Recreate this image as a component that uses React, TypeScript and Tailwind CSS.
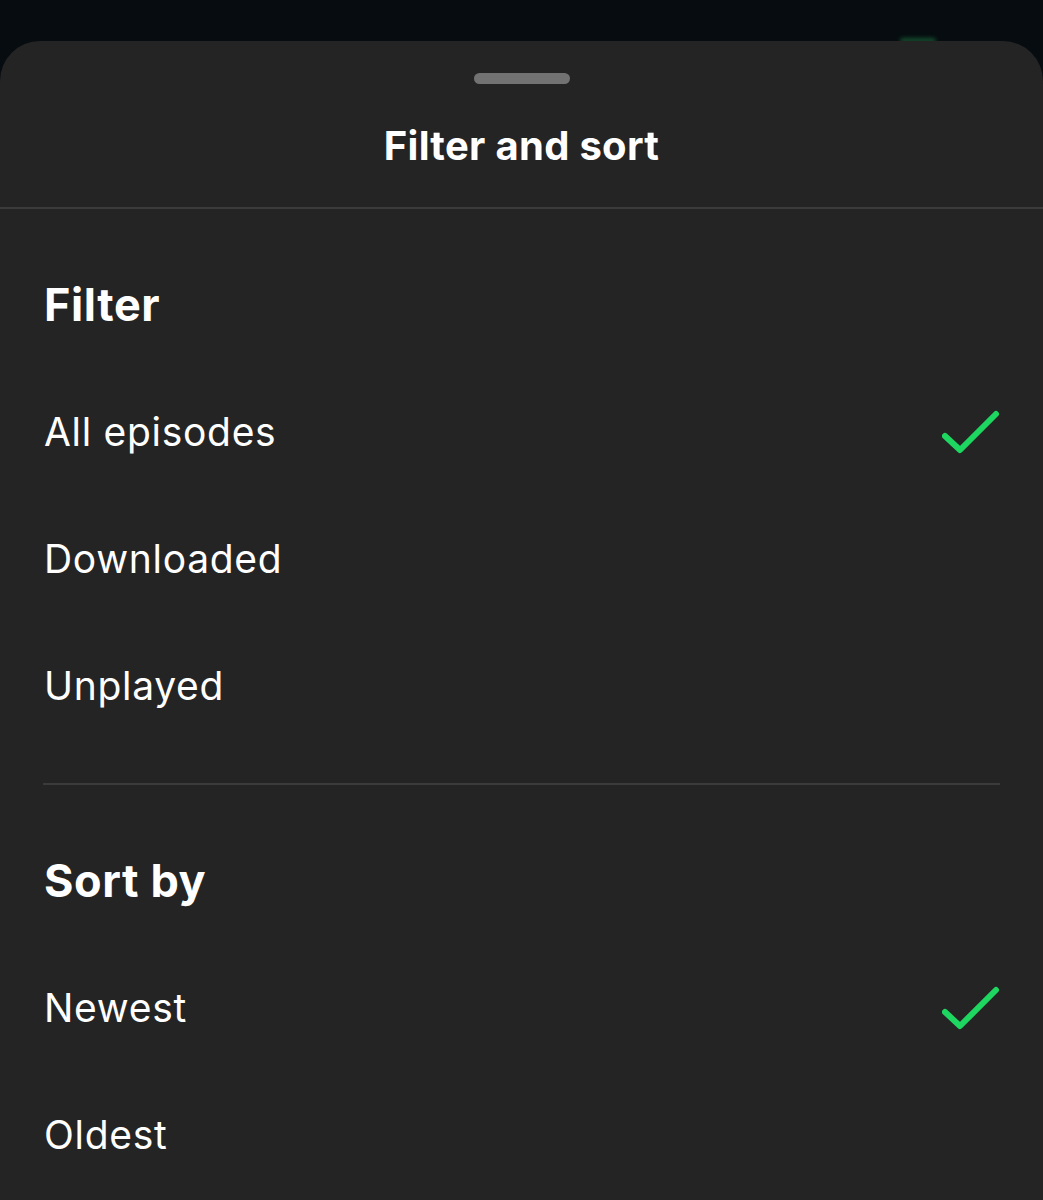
import React from "react";

function Check() {
  return (
    <svg width="60" height="48" viewBox="0 0 60 48" fill="none" className="shrink-0">
      <path d="M3 27 L18 41 L54 5" stroke="#1ed760" strokeWidth="6" strokeLinecap="round" strokeLinejoin="round" />
    </svg>
  );
}

function Row({ label, checked }: { label: string; checked?: boolean }) {
  return (
    <div className="h-[127px] flex items-center justify-between">
      <span className="text-[39px] tracking-[0.7px] text-white">{label}</span>
      {checked ? <div className="mr-[-3px]"><Check /></div> : null}
    </div>
  );
}

function Heading({ children }: { children: React.ReactNode }) {
  return (
    <div className="h-[160px] pt-[32px] flex items-center">
      <span className="text-[45px] font-bold tracking-[0.6px] text-white">{children}</span>
    </div>
  );
}

export default function App() {
  return (
    <div
      className="w-[1043px] h-[1200px] overflow-hidden bg-[#060c0f] relative"
      style={{ fontFamily: "Inter, 'Noto Sans', sans-serif" }}
    >
      <div className="absolute left-[900px] top-[38px] w-[36px] h-[5px] rounded-full bg-[#1f7a44] blur-[2px] opacity-60" />
      <div className="relative mt-[41px] h-[1159px] rounded-t-[40px] bg-[#242424]">
        <div className="pt-[32px] flex justify-center">
          <div className="w-[96px] h-[11px] rounded-full bg-[#727272]" />
        </div>
        <div className="h-[123px] flex items-center justify-center">
          <span className="text-[40px] font-bold tracking-[0.3px] text-white">Filter and sort</span>
        </div>
        <div className="h-[2px] bg-[#3b3b3b]" />
        <div className="px-[44px]">
          <Heading>Filter</Heading>
          <Row label="All episodes" checked />
          <Row label="Downloaded" />
          <Row label="Unplayed" />
          <div className="mt-[33px] h-[2px] bg-[#3b3b3b] ml-[-1px] mr-[-1px]" />
          <Heading>Sort by</Heading>
          <Row label="Newest" checked />
          <Row label="Oldest" />
        </div>
      </div>
    </div>
  );
}
